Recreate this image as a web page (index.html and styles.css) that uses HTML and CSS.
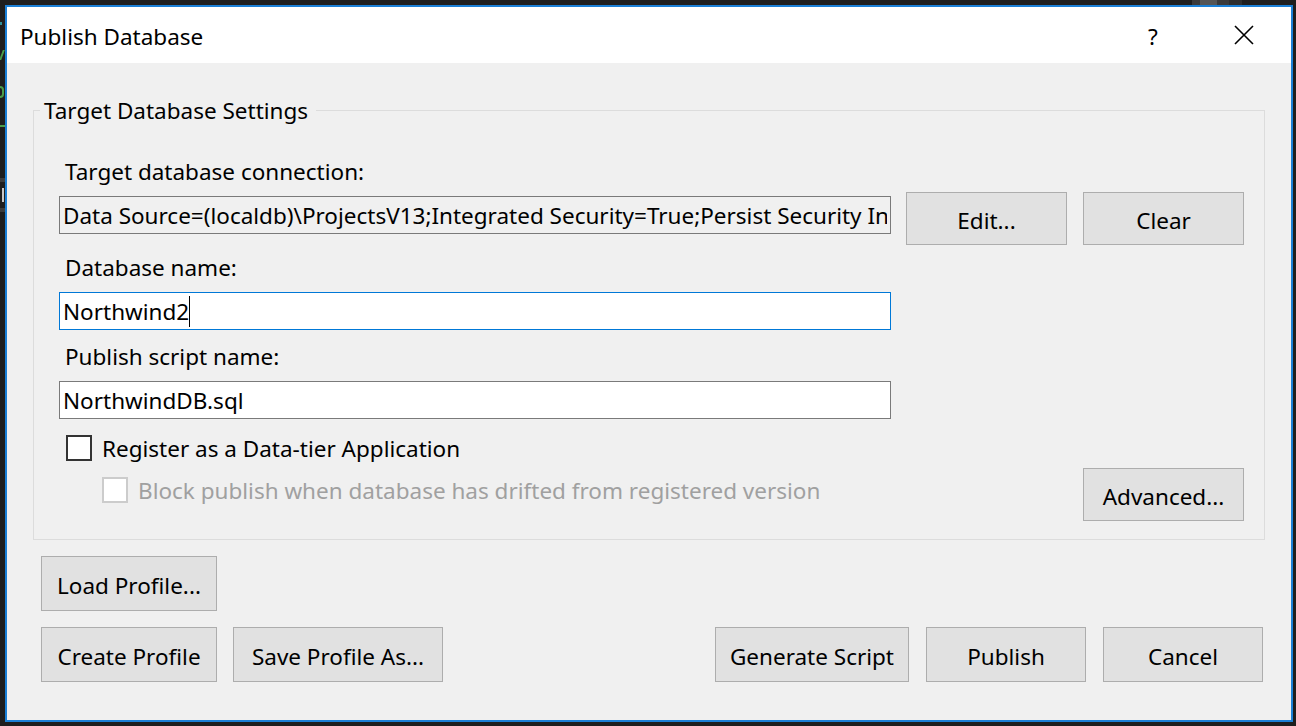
FILE: index.html
```html
<!DOCTYPE html>
<html>
<head>
<meta charset="utf-8">
<title>Publish Database</title>
<link rel="stylesheet" href="styles.css">
</head>
<body>
<div class="frag frag-dot"></div>
<div class="frag frag-v"></div>
<div class="frag frag-e"></div>
<div class="frag frag-line"></div>
<div class="frag frag-bar1"></div>
<div class="frag frag-j"></div>
<div class="frag frag-bar2"></div>
<div class="frag tab-a"></div>
<div class="frag tab-b"></div>
<div class="frag tab-c"></div>

<div class="dialog">
  <div class="titlebar">
    <div class="title">Publish Database</div>
    <div class="help">?</div>
    <div class="close">
      <svg width="20" height="20" viewBox="0 0 20 20"><path d="M1 1 L19 19 M19 1 L1 19" stroke="#000" stroke-width="1.6" fill="none"/></svg>
    </div>
  </div>
  <div class="content">
    <div class="group">
      <div class="legend">Target Database Settings</div>
      <div class="label first">Target database connection:</div>
      <div class="row conn">
        <div class="textbox readonly"><span class="clip">Data Source=(localdb)\ProjectsV13;Integrated Security=True;Persist Security In</span></div>
        <div class="btn btn-edit">Edit...</div>
        <div class="btn btn-clear">Clear</div>
      </div>
      <div class="label second">Database name:</div>
      <div class="textbox focused">Northwind2<span class="caret"></span></div>
      <div class="label third">Publish script name:</div>
      <div class="textbox">NorthwindDB.sql</div>
      <div class="check-row">
        <div class="checkbox"></div>
        <div class="check-text">Register as a Data-tier Application</div>
      </div>
      <div class="row last">
        <div class="check-row sub">
          <div class="checkbox disabled"></div>
          <div class="check-text disabled-text">Block publish when database has drifted from registered version</div>
        </div>
        <div class="btn btn-adv">Advanced...</div>
      </div>
    </div>
    <div class="profile-row">
      <div class="btn btn-load">Load Profile...</div>
    </div>
    <div class="action-row">
      <div class="btn btn-create">Create Profile</div>
      <div class="btn btn-save">Save Profile As...</div>
      <div class="btn btn-gen">Generate Script</div>
      <div class="btn btn-pub">Publish</div>
      <div class="btn btn-cancel">Cancel</div>
    </div>
  </div>
</div>
</body>
</html>
```

FILE: styles.css
```css
html, body {
  margin: 0;
  padding: 0;
}
body {
  width: 1296px;
  height: 726px;
  overflow: hidden;
  background: #1e1e1e;
  position: relative;
  font-family: "Noto Sans", "Open Sans", sans-serif;
  font-size: 22.5px;
  color: #000;
  padding: 5px 0 0 5px;
  box-sizing: border-box;
}

/* background fragments of the window behind */
.frag { position: absolute; }
.frag-dot { left: 0; top: 22px; width: 2px; height: 3px; background: #2f8f9a; }
.frag-v { left: 1px; top: 50px; width: 2px; height: 10px; background: #4a9e4a; transform: skewX(-20deg); }
.frag-e { left: 0; top: 86px; width: 4px; height: 12px; border: 2px solid #4a9e4a; border-left: none; border-radius: 0 5px 5px 0; box-sizing: border-box; }
.frag-line { left: 0; top: 125px; width: 5px; height: 2px; background: #4a9e4a; }
.frag-bar1 { left: 0; top: 178px; width: 5px; height: 4px; background: #3c3c3c; }
.frag-j { left: 2px; top: 188px; width: 2px; height: 14px; background: #c8c8c8; }
.frag-bar2 { left: 0; top: 208px; width: 5px; height: 4px; background: #3c3c3c; }
.tab-a { left: 1192px; top: 0; width: 50px; height: 5px; background: #3a3a3a; }
.tab-b { left: 1200px; top: 0; width: 17px; height: 5px; background: #555555; }
.tab-c { left: 1229px; top: 0; width: 13px; height: 5px; background: #2e2e2e; }

.dialog {
  position: relative;
  width: 1288px;
  height: 717px;
  box-sizing: border-box;
  border: 2px solid #1a7fd6;
  background: #f0f0f0;
  display: flex;
  flex-direction: column;
}

.titlebar {
  height: 56px;
  background: #ffffff;
  display: flex;
  align-items: center;
  padding: 4px 24px 0 13px;
  box-sizing: border-box;
  flex: none;
}
.title {
  flex: 1;
  line-height: 30px;
}
.help {
  width: 46px;
  text-align: center;
  line-height: 30px;
}
.close {
  width: 46px;
  margin-left: 45px;
  display: flex;
  justify-content: center;
  align-items: center;
  height: 30px;
  margin-top: -4px;
}

.content {
  flex: 1;
  padding: 47px 26px 0 26px;
  display: flex;
  flex-direction: column;
}

.group {
  border: 1px solid #dcdcdc;
  padding: 0 20px 18px 25px;
  display: flex;
  flex-direction: column;
}
.legend {
  align-self: flex-start;
  margin: -16px 0 0 -19px;
  padding: 1px 8px 0 4px;
  background: #f0f0f0;
  line-height: 30px;
}

.label {
  line-height: 30px;
  padding-left: 6px;
  padding-top: 1px;
}
.label.first { margin-top: 30px; }
.label.second { margin-top: 7px; margin-bottom: 9px; }
.label.third { margin-top: 11px; margin-bottom: 9px; }

.row {
  display: flex;
  align-items: flex-start;
}
.conn {
  margin-top: 5px;
  height: 53px;
}

.textbox {
  width: 832px;
  height: 38px;
  box-sizing: border-box;
  border: 1px solid #7a7a7a;
  background: #ffffff;
  padding: 1px 3px 0 3px;
  line-height: 36px;
  white-space: nowrap;
  overflow: hidden;
  flex: none;
  display: flex;
  align-items: center;
}
.textbox.readonly {
  background: #f0f0f0;
  margin-top: 4px;
}
.clip {
  display: block;
  width: 826px;
  overflow: hidden;
  white-space: nowrap;
}
.textbox.focused {
  border-color: #0078d7;
}
.caret {
  display: inline-block;
  width: 0;
  height: 31px;
  border-left: 1px solid #000;
  margin-left: 0;
}

.btn {
  box-sizing: border-box;
  border: 1px solid #adadad;
  background: #e1e1e1;
  display: flex;
  align-items: center;
  justify-content: center;
  white-space: nowrap;
  flex: none;
  padding-top: 3px;
}
.btn-edit { width: 161px; height: 53px; margin-left: 15px; }
.btn-clear { width: 161px; height: 53px; margin-left: 16px; }
.btn-adv { width: 161px; height: 53px; margin-left: auto; }

.check-row {
  display: flex;
  align-items: center;
  height: 30px;
  margin-top: 14px;
}
.checkbox {
  width: 26px;
  height: 26px;
  box-sizing: border-box;
  border: 2px solid #333333;
  background: #ffffff;
  margin-left: 7px;
  flex: none;
}
.check-text {
  margin-left: 10px;
  line-height: 30px;
  padding-top: 2px;
}
.last {
  margin-top: 5px;
  height: 53px;
}
.check-row.sub {
  margin-top: 7px;
}
.checkbox.disabled {
  border-color: #cccccc;
  margin-left: 43px;
  width: 26px;
  height: 26px;
}
.disabled-text {
  color: #a0a0a0;
}

.profile-row {
  margin-top: 16px;
  padding-left: 8px;
  display: flex;
}
.btn-load { width: 176px; height: 55px; }

.action-row {
  margin-top: 16px;
  padding-left: 8px;
  padding-right: 2px;
  display: flex;
}
.btn-create { width: 176px; height: 55px; }
.btn-save { width: 210px; height: 55px; margin-left: 16px; }
.btn-gen { width: 194px; height: 55px; margin-left: auto; }
.btn-pub { width: 160px; height: 55px; margin-left: 17px; }
.btn-cancel { width: 160px; height: 55px; margin-left: 17px; }
```
